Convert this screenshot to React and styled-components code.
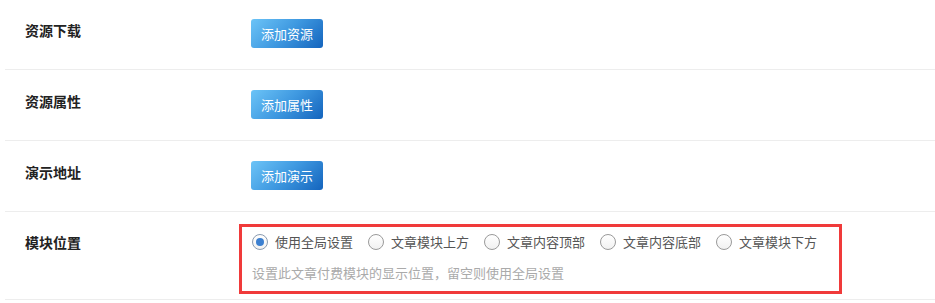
import React from 'react';
import styled, { createGlobalStyle } from 'styled-components';

const Global = createGlobalStyle`
  html, body { margin: 0; padding: 0; background: #fff; }
  body { font-family: "Noto Sans CJK SC", "Noto Sans", sans-serif; overflow: hidden; }
`;

const Page = styled.div`
  margin: -1px 0 0 5px;
`;

const Row = styled.div`
  display: flex;
  align-items: flex-start;
  padding: ${p => p.$top || 12}px 0 ${p => p.$bottom || 11}px;
  border-bottom: 1px solid #ededed;
`;

const Label = styled.div`
  width: 246px;
  flex-shrink: 0;
  box-sizing: border-box;
  padding: 9px 0 0 20px;
  font-size: 14px;
  line-height: 20px;
  font-weight: bold;
  color: #222;
`;

const Content = styled.div`
  flex: 1;
`;

const AddButton = styled.button`
  display: block;
  margin: 8px 0 10px;
  height: 29px;
  padding: 0 10px;
  border: none;
  border-radius: 3px;
  background: linear-gradient(135deg, #6cc4f7 0%, #3e98e0 50%, #1464bd 100%);
  color: #fff;
  font-family: inherit;
  font-size: 13px;
  line-height: 29px;
  cursor: pointer;
`;

const Field = styled.div`
  margin: 1px 0 0 -12px;
  width: 603px;
  height: 70px;
  box-sizing: border-box;
  border: 3px solid #f03a3a;
  padding: 5px 10px 0;
`;

const Radios = styled.div`
  display: flex;
  align-items: center;
  height: 20px;
`;

const Option = styled.label`
  display: flex;
  align-items: center;
  flex-shrink: 0;
  white-space: nowrap;
  margin-right: 15px;
  font-size: 13px;
  color: #555;
  line-height: 20px;
  cursor: pointer;
`;

const Circle = styled.span`
  width: 16px;
  height: 16px;
  flex-shrink: 0;
  box-sizing: border-box;
  border-radius: 50%;
  border: 1px solid ${p => (p.$on ? '#8a9bb0' : '#9a9a9a')};
  background: linear-gradient(#fff, #f1f1f1);
  margin-right: 7px;
  display: flex;
  align-items: center;
  justify-content: center;
  &::after {
    content: '';
    display: ${p => (p.$on ? 'block' : 'none')};
    width: 8px;
    height: 8px;
    border-radius: 50%;
    background: #3b7fd0;
  }
`;

const Help = styled.div`
  margin-top: 11px;
  font-size: 13px;
  line-height: 20px;
  color: #aaa;
  white-space: nowrap;
`;

const options = ['使用全局设置', '文章模块上方', '文章内容顶部', '文章内容底部', '文章模块下方'];

export default function App() {
  const [pos, setPos] = React.useState(0);
  const rows = [
    ['资源下载', '添加资源'],
    ['资源属性', '添加属性'],
    ['演示地址', '添加演示'],
  ];
  return (
    <Page>
      <Global />
      {rows.map(([label, btn]) => (
        <Row key={label}>
          <Label>{label}</Label>
          <Content>
            <AddButton>{btn}</AddButton>
          </Content>
        </Row>
      ))}
      <Row $top={11} $bottom={5}>
        <Label>模块位置</Label>
        <Content>
          <Field>
            <Radios>
              {options.map((o, i) => (
                <Option key={o} onClick={() => setPos(i)}>
                  <Circle $on={pos === i} />
                  {o}
                </Option>
              ))}
            </Radios>
            <Help>设置此文章付费模块的显示位置，留空则使用全局设置</Help>
          </Field>
        </Content>
      </Row>
    </Page>
  );
}
